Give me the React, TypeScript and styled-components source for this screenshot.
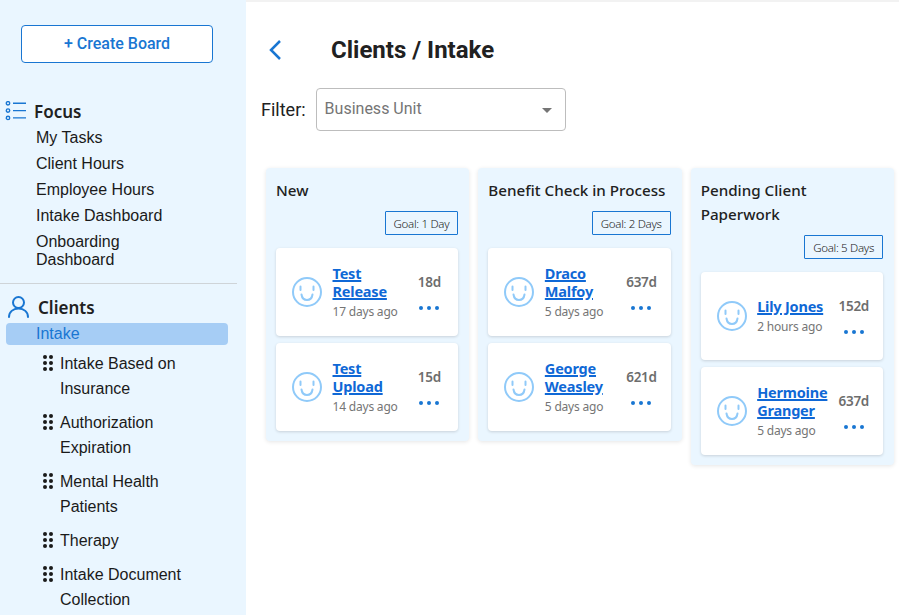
import React from "react";
import styled, { createGlobalStyle } from "styled-components";

type card = {
  name: string[];
  ago: string;
  days: string;
};
type column = {
  title: string;
  goal: string;
  cards: card[];
};

const columns: column[] = [
  {
    title: "New",
    goal: "Goal: 1 Day",
    cards: [
      { name: ["Test", "Release"], ago: "17 days ago", days: "18d" },
      { name: ["Test", "Upload"], ago: "14 days ago", days: "15d" },
    ],
  },
  {
    title: "Benefit Check in Process",
    goal: "Goal: 2 Days",
    cards: [
      { name: ["Draco", "Malfoy"], ago: "5 days ago", days: "637d" },
      { name: ["George", "Weasley"], ago: "5 days ago", days: "621d" },
    ],
  },
  {
    title: "Pending Client Paperwork",
    goal: "Goal: 5 Days",
    cards: [
      { name: ["Lily Jones"], ago: "2 hours ago", days: "152d" },
      { name: ["Hermoine", "Granger"], ago: "5 days ago", days: "637d" },
    ],
  },
];

const focusLinks = ["My Tasks", "Client Hours", "Employee Hours", "Intake Dashboard"];
const boards = [
  "Intake Based on Insurance",
  "Authorization Expiration",
  "Mental Health Patients",
  "Therapy",
  "Intake Document Collection",
];

const Smiley = () => (
  <FaceIcon viewBox="0 0 30 30" fill="none" stroke="#90caf9" strokeWidth="2" strokeLinecap="round">
    <circle cx="15" cy="15" r="14" />
    <path d="M8.500 9.500v3.500M21.500 9.500v3.500" />
    <path d="M9.500 17.500c.5 3.500 2.700 5.500 5.500 5.500s5-2 5.500-5.500" />
  </FaceIcon>
);

const DragDots = () => (
  <DragIcon viewBox="0 0 10 16" fill="#1a1a1a">
    <circle cx="2" cy="2" r="2" />
    <circle cx="8" cy="2" r="2" />
    <circle cx="2" cy="8" r="2" />
    <circle cx="8" cy="8" r="2" />
    <circle cx="2" cy="14" r="2" />
    <circle cx="8" cy="14" r="2" />
  </DragIcon>
);

const App = () => {
  return (
    <Page>
      <GlobalStyle />
      <Sidebar>
        <CreateButton>+ Create Board</CreateButton>
        <FocusHeading>
          <svg width="21" height="20" viewBox="0 0 21 20" fill="none" stroke="#1976d2" strokeWidth="1.400">
            <circle cx="3" cy="2.300" r="1.700" />
            <circle cx="3" cy="9.600" r="1.700" />
            <circle cx="3" cy="16.900" r="1.700" />
            <path d="M8 2.300h13M8 9.600h13M8 16.900h13" />
          </svg>
          <span>Focus</span>
        </FocusHeading>
        <FocusLinks>
          {focusLinks.map((l) => (
            <NavLink key={l}>{l}</NavLink>
          ))}
          <NavLink>
            Onboarding
            <br />
            Dashboard
          </NavLink>
        </FocusLinks>
        <Divider />
        <ClientsHeading>
          <svg width="21" height="22" viewBox="0 0 21 22" fill="none" stroke="#1976d2" strokeWidth="2" strokeLinecap="round">
            <circle cx="10.500" cy="6.500" r="5.500" />
            <path d="M1 21c0-5 4-8.500 9.500-8.500s9.500 3.500 9.500 8.500" />
          </svg>
          <span>Clients</span>
        </ClientsHeading>
        <ActiveLink>Intake</ActiveLink>
        <BoardList>
          {boards.map((b) => (
            <BoardItem key={b}>
              <DragDots />
              <span>{b}</span>
            </BoardItem>
          ))}
        </BoardList>
      </Sidebar>
      <Main>
        <TitleRow>
          <BackIcon width="14" height="22" viewBox="0 0 14 22" fill="none" stroke="#1976d2" strokeWidth="2.500">
            <path d="M12 2L3 11l9 9" />
          </BackIcon>
          <Title>Clients / Intake</Title>
        </TitleRow>
        <FilterRow>
          <FilterLabel>Filter:</FilterLabel>
          <Select>
            <span>Business Unit</span>
            <Caret />
          </Select>
        </FilterRow>
        <Board>
          {columns.map((c) => (
            <Column key={c.title}>
              <ColumnTitle>{c.title}</ColumnTitle>
              <GoalRow>
                <Goal>{c.goal}</Goal>
              </GoalRow>
              <Cards>
                {c.cards.map((k) => (
                  <Card key={k.name.join(" ")}>
                    <Smiley />
                    <CardText>
                      <CardName href="#">
                        {k.name.map((n, i) => (
                          <React.Fragment key={n}>
                            {i > 0 && <br />}
                            {n}
                          </React.Fragment>
                        ))}
                      </CardName>
                      <Ago>{k.ago}</Ago>
                    </CardText>
                    <CardSide>
                      <Days>{k.days}</Days>
                      <More>
                        <i />
                        <i />
                        <i />
                      </More>
                    </CardSide>
                  </Card>
                ))}
              </Cards>
            </Column>
          ))}
        </Board>
      </Main>
    </Page>
  );
};
export default App;

const GlobalStyle = createGlobalStyle`
  html, body {
    margin: 0;
    padding: 0;
    height: 100%;
    overflow: hidden;
    background: #fff;
  }
  * {
    box-sizing: border-box;
  }
`;

const Page = styled.div`
  display: flex;
  height: 615px;
  overflow: hidden;
  font-family: "Liberation Sans", Arial, sans-serif;
`;

const Sidebar = styled.div`
  width: 246px;
  flex-shrink: 0;
  background-color: #eaf6ff;
  padding-top: 25px;
  color: #1a1a1a;
  font-size: 16px;
`;

const CreateButton = styled.button`
  display: block;
  width: 192px;
  height: 38px;
  margin-left: 21px;
  margin-bottom: 36px;
  padding-bottom: 3px;
  background: #fff;
  border: 1px solid #1976d2;
  border-radius: 4px;
  color: #1976d2;
  font-family: Roboto, sans-serif;
  font-size: 16px;
  font-weight: 500;
`;

const FocusHeading = styled.div`
  display: flex;
  align-items: center;
  gap: 8px;
  height: 24px;
  padding-left: 5px;
  font-family: "Noto Sans", sans-serif;
  font-size: 17px;
  font-weight: 600;
  color: #212121;
`;

const FocusLinks = styled.div`
  padding-top: 2px;
`;

const NavLink = styled.div`
  padding: 4px 0 4px 36px;
  line-height: 18px;
`;

const Divider = styled.div`
  width: 237px;
  height: 1px;
  margin-top: 10px;
  background-color: #cfd4d8;
`;

const ClientsHeading = styled.div`
  display: flex;
  align-items: center;
  gap: 9px;
  height: 24px;
  margin-top: 11px;
  padding-left: 8px;
  font-family: "Noto Sans", sans-serif;
  font-size: 17px;
  font-weight: 600;
  color: #212121;
`;

const ActiveLink = styled.div`
  width: 222px;
  height: 22px;
  margin: 4px 0 0 6px;
  padding-left: 30px;
  background-color: #a6cdf5;
  border-radius: 4px;
  color: #1976d2;
  line-height: 21px;
`;

const BoardList = styled.div`
  display: flex;
  flex-direction: column;
  gap: 9px;
  padding: 6px 40px 0 43px;
`;

const BoardItem = styled.div`
  display: flex;
  gap: 7px;
  line-height: 25px;
`;

const DragIcon = styled.svg`
  width: 10px;
  height: 16px;
  flex-shrink: 0;
  margin-top: 4px;
`;

const Main = styled.div`
  flex: 1;
  min-width: 0;
  padding-top: 28px;
  border-top: 2px solid #f2f2f2;
`;

const TitleRow = styled.div`
  display: flex;
  align-items: center;
  height: 40px;
  padding-left: 22px;
`;

const BackIcon = styled.svg`
  flex-shrink: 0;
`;

const Title = styled.h1`
  margin: 0 0 0 49px;
  font-family: Roboto, sans-serif;
  font-size: 24px;
  font-weight: 700;
  color: #212121;
`;

const FilterRow = styled.div`
  display: flex;
  align-items: center;
  gap: 10px;
  margin-top: 18px;
  padding-left: 15px;
`;

const FilterLabel = styled.span`
  font-family: Roboto, sans-serif;
  font-size: 18px;
  color: #212121;
`;

const Select = styled.div`
  display: flex;
  align-items: center;
  justify-content: space-between;
  width: 250px;
  height: 43px;
  padding: 0 13px 2px 8px;
  border: 1px solid #bdbdbd;
  border-radius: 4px;
  font-family: Roboto, sans-serif;
  font-size: 16px;
  color: #757575;
`;

const Caret = styled.div`
  width: 0;
  height: 0;
  margin-top: 4px;
  border-left: 5px solid transparent;
  border-right: 5px solid transparent;
  border-top: 5px solid #757575;
`;

const Board = styled.div`
  display: flex;
  align-items: flex-start;
  gap: 9px;
  margin-top: 37px;
  padding-left: 20px;
`;

const Column = styled.div`
  width: 203.330px;
  padding: 10px 11px 10px 10px;
  background-color: #eaf6ff;
  border-radius: 4px;
  box-shadow: 0 1px 4px rgba(0, 0, 0, 0.1);
`;

const ColumnTitle = styled.div`
  font-family: "Noto Sans", sans-serif;
  font-size: 15.200px;
  font-weight: 500;
  line-height: 24px;
  color: #212121;
`;

const GoalRow = styled.div`
  display: flex;
  justify-content: flex-end;
  margin-top: 9px;
`;

const Goal = styled.div`
  height: 24px;
  padding: 0 8px;
  border: 1px solid #1976d2;
  border-radius: 1px;
  font-family: "Noto Sans", sans-serif;
  font-size: 11.500px;
  font-weight: 300;
  letter-spacing: -0.3px;
  line-height: 23px;
  color: #212121;
`;

const Cards = styled.div`
  display: flex;
  flex-direction: column;
  gap: 7px;
  margin-top: 13px;
`;

const Card = styled.div`
  display: flex;
  align-items: center;
  height: 88px;
  padding: 0 14px 0 16px;
  background-color: #fff;
  border-radius: 4px;
  box-shadow: 0 1px 3px rgba(0, 0, 0, 0.15);
`;

const FaceIcon = styled.svg`
  width: 30px;
  height: 30px;
  flex-shrink: 0;
`;

const CardText = styled.div`
  flex: 1;
  min-width: 0;
  margin-left: 10.500px;
`;

const CardName = styled.a`
  display: block;
  font-family: "Noto Sans", sans-serif;
  font-size: 14.500px;
  font-weight: 700;
  letter-spacing: -0.2px;
  line-height: 18px;
  color: #0f68d6;
  text-decoration: underline;
  text-decoration-thickness: 1.500px;
`;

const Ago = styled.div`
  margin-top: 3px;
  font-family: "Noto Sans", sans-serif;
  font-size: 12px;
  letter-spacing: -0.2px;
  line-height: 18px;
  color: #757575;
`;

const CardSide = styled.div`
  display: flex;
  flex-direction: column;
  align-items: center;
  gap: 15px;
  min-width: 30px;
  margin-bottom: 2px;
`;

const Days = styled.div`
  font-family: "Noto Sans", sans-serif;
  font-size: 13.500px;
  font-weight: 600;
  letter-spacing: -0.3px;
  line-height: 18px;
  color: #6d6d6d;
`;

const More = styled.div`
  display: flex;
  gap: 4px;
  i {
    width: 4px;
    height: 4px;
    border-radius: 50%;
    background-color: #1976d2;
  }
`;
